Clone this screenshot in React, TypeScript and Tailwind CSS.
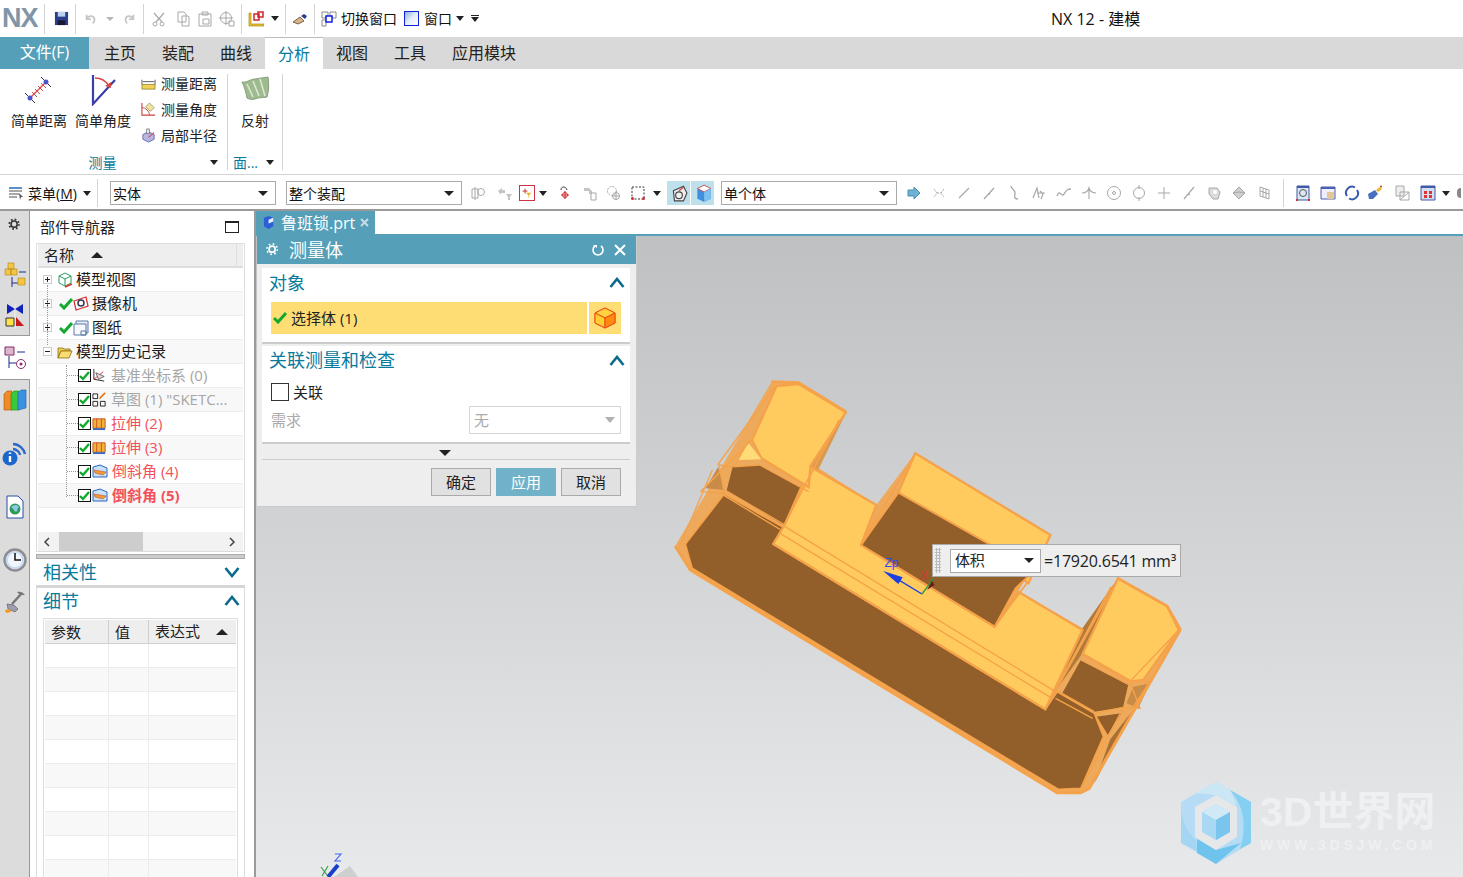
import type { ReactNode } from "react";

const FONT = "font-['Open_Sans','Noto_Sans_CJK_SC','Noto_Sans',sans-serif]";

function Ico({ s = 16, children, className = "" }: { s?: number; children: ReactNode; className?: string }) {
  return (
    <svg width={s} height={s} viewBox="0 0 16 16" fill="none" className={`shrink-0 ${className}`}>
      {children}
    </svg>
  );
}

function Tri({ className = "" }: { className?: string }) {
  return <span className={`inline-block h-0 w-0 border-x-[5px] border-t-[5px] border-x-transparent border-t-[#222] ${className}`} />;
}

function UpTri({ className = "" }: { className?: string }) {
  return <span className={`inline-block h-0 w-0 border-x-[6px] border-b-[6px] border-x-transparent border-b-[#222] ${className}`} />;
}

function Chevron({ down = false }: { down?: boolean }) {
  return (
    <svg width="16" height="12" viewBox="0 0 16 12" fill="none">
      <path d={down ? "M1.5 2 8 10 14.5 2" : "M1.5 10 8 2 14.5 10"} stroke="#0b6a8a" strokeWidth="2.6" />
    </svg>
  );
}

function Sep({ ml }: { ml: string }) {
  return <div className={`h-[30px] w-px shrink-0 bg-[#d4d4d4] ${ml}`} />;
}

const GRAY = "#a8a8a8";

const snapIcons: ReactNode[] = [
  <path d="M2 5h6V2l6 6-6 6v-3H2z" fill="#6db3d6" stroke="#4a8cab" />,
  <g stroke={GRAY} strokeDasharray="2 1"><path d="M3 4l3 4-3 4M13 4l-3 4 3 4M6 8h4" /></g>,
  <path d="M3 13 13 3" stroke={GRAY} strokeWidth="1.3" />,
  <path d="M3 14 13 3M8 8.500l1 1" stroke={GRAY} strokeWidth="1.3" />,
  <path d="M5 1c0 3 4 3 4 7s-1 4 0 5 3 1 3 1" stroke={GRAY} strokeWidth="1.3" />,
  <path d="M2 13 6 3l2 10M9 6l3 3-2 5M6 8h8" stroke={GRAY} strokeWidth="1.2" />,
  <path d="M1 11c3-8 4 2 7-2s3-5 7-5" stroke={GRAY} strokeWidth="1.3" />,
  <path d="M8 2v12M1 8c3 0 6-2 7-5 1 3 4 5 7 5" stroke={GRAY} strokeWidth="1.1" />,
  <g stroke={GRAY}><circle cx="8" cy="8" r="6.500" /><circle cx="8" cy="8" r="1.500" /></g>,
  <g stroke={GRAY}><circle cx="8" cy="8" r="5.500" /><path d="M8 0v4M8 12v4" /></g>,
  <path d="M8 2v12M2 8h12" stroke={GRAY} />,
  <path d="M3 14 13 2M7 9l2 1" stroke={GRAY} strokeWidth="1.2" />,
  <g><path d="M3 3h8l3 4-2 7H7L3 9z" fill="#dcdcdc" stroke={GRAY} /><circle cx="9" cy="7" r="2" fill="#fff" /></g>,
  <g stroke={GRAY} fill="#cfcfcf"><path d="M8 2l6 6-6 6-6-6z" /><path d="M2 8l6-1 6 1" fill="none" /></g>,
  <g stroke={GRAY}><path d="M4 2l9 3v9l-9-3z" /><path d="M7 3v9M10 4v9M4 6l9 3" /></g>,
];

function TopBar() {
  return (
    <div className="flex h-[37px] shrink-0 items-center bg-white text-[14px] text-[#111]">
      <span className="ml-[2px] w-[38px] font-['Liberation_Sans',sans-serif] text-[27px] leading-none font-bold tracking-[-1px] text-[#8195a8]">NX</span>
      <Sep ml="ml-[4px]" />
      <Ico className="ml-[9px]" s={15}>
        <path d="M1 1h14v14H1z" fill="#2b3e8c" /><path d="M4 1h8v5H4z" fill="#bcd0ef" /><path d="M4 10h8v5H4z" fill="#161b33" />
      </Ico>
      <Sep ml="ml-[6px]" />
      <Ico className="ml-[8px]" s={14}><path d="M3 3v5h5M3 8c3-5 9-4 9 1 0 2-1 3-2 4" stroke="#c6c6c6" strokeWidth="2" /></Ico>
      <Tri className="ml-[8px] !border-x-[4px] !border-t-[4px] !border-t-[#b5b5b5]" />
      <Ico className="ml-[8px]" s={14}><path d="M13 3v5H8M13 8C10 3 4 4 4 9c0 2 1 3 2 4" stroke="#c6c6c6" strokeWidth="2" /></Ico>
      <Sep ml="ml-[7px]" />
      <Ico className="ml-[7px]"><path d="M13 2 5 11M3 2l8 9" stroke={GRAY} strokeWidth="1.2" /><circle cx="4" cy="13" r="2" stroke={GRAY} /><circle cx="11" cy="13" r="2" stroke={GRAY} /></Ico>
      <Ico className="ml-[8px]"><path d="M3 1h6l2 2v8H3zM7 5h6l1 1v9H7z" fill="#fff" stroke={GRAY} /></Ico>
      <Ico className="ml-[6px]"><path d="M2 3h12v12H2zM5 1h6v3H5zM6 8h6v5H6z" fill="#fff" stroke={GRAY} /></Ico>
      <Ico className="ml-[6px]"><circle cx="7" cy="7" r="5.500" stroke={GRAY} /><path d="M7 0v14M0 7h14M10 10h5v5h-5z" stroke={GRAY} /></Ico>
      <Sep ml="ml-[6px]" />
      <Ico className="ml-[6px]"><path d="M1 2v13h15v-2H3V2z" fill="#e5c22d" stroke="#b08a10" strokeWidth=".7" /><path d="M6 3h5v6H6z" stroke="#d0262e" strokeWidth="1.500" /><path d="M10 1h5v5h-5z" stroke="#d0262e" strokeWidth="1.500" /></Ico>
      <Tri className="ml-[7px] !border-x-[4px]" />
      <Sep ml="ml-[6px]" />
      <Ico className="ml-[6px]"><path d="M1 11 8 6l4 4-6 3z" fill="#d7b58a" stroke="#7e6446" /><path d="M9 5l3-2 3 2-2 3z" fill="#2d3c8f" /></Ico>
      <Sep ml="ml-[6px]" />
      <Ico className="ml-[6px]"><path d="M1 1h6v4H5v2H1zM9 1h6v6h-4V5H9zM1 9h4v6H1z" stroke="#8a8a8a" /><path d="M5 5h6v6H5z" fill="#fff" stroke="#1122dd" strokeWidth="1.500" /></Ico>
      <span className="ml-[4px] whitespace-nowrap">切换窗口</span>
      <span className="ml-[7px] h-[15px] w-[15px] shrink-0 border-[1.500px] border-[#1122dd] bg-gradient-to-br from-[#8fb1d8] via-[#e5eff9] to-white" />
      <span className="ml-[5px] whitespace-nowrap">窗口</span>
      <Tri className="ml-[4px] !border-x-[4px]" />
      <span className="ml-[7px] flex flex-col items-center gap-px"><span className="h-px w-[8px] bg-[#222]" /><Tri className="!border-x-[4px]" /></span>
      <span className="ml-[572px] text-[16px] whitespace-nowrap">NX 12 - 建模</span>
    </div>
  );
}

const tabs = [
  { label: "主页", w: "w-[58px]" },
  { label: "装配", w: "w-[58px]" },
  { label: "曲线", w: "w-[58px]" },
  { label: "分析", w: "w-[58px]", active: true },
  { label: "视图", w: "w-[58px]" },
  { label: "工具", w: "w-[58px]" },
  { label: "应用模块", w: "w-[90px]" },
];

function TabRow() {
  return (
    <div className="flex h-[32px] shrink-0 items-stretch bg-[#d9d9d9] text-[16px] text-[#222]">
      <div className="flex w-[89px] items-center justify-center bg-[#559fb9] pb-[3px] text-white">文件(F)</div>
      <div className="w-[2px]" />
      {tabs.map((t) => (
        <div
          key={t.label}
          className={`flex items-center justify-center ${t.w} ${t.active ? "border-t border-[#bbb] bg-white text-[#0a7a9c]" : ""}`}
        >
          {t.label}
        </div>
      ))}
    </div>
  );
}

function SmallTool({ icon, label }: { icon: ReactNode; label: string }) {
  return (
    <div className="flex h-[26px] items-center gap-[5px]">
      {icon}
      <span className="whitespace-nowrap">{label}</span>
    </div>
  );
}

function Ribbon() {
  return (
    <div className="flex h-[106px] shrink-0 border-b border-[#d4d4d4] bg-white text-[14px] text-[#222]">
      <div className="flex w-[227px] flex-col">
        <div className="flex h-[85px] pt-[5px]">
          <div className="ml-[7px] flex w-[64px] flex-col items-center">
            <svg width="32" height="32" viewBox="0 0 32 32" fill="none">
              <path d="M2 19l10 10M18 3l10 10" stroke="#333" />
              <path d="M6 25 24 7" stroke="#d84a4a" strokeWidth="1.200" />
              <path d="M9 18l5 5M12 15l5 5M15 12l5 5M18 9l5 5" stroke="#d84a4a" />
              <circle cx="7" cy="24" r="2.500" fill="#4a55c8" /><circle cx="23" cy="8" r="2.500" fill="#4a55c8" />
            </svg>
            <span className="mt-[4px] whitespace-nowrap">简单距离</span>
          </div>
          <div className="flex w-[64px] flex-col items-center">
            <svg width="32" height="32" viewBox="0 0 32 32" fill="none">
              <path d="M6 1v29L28 6" stroke="#3b3fa8" strokeWidth="2.200" />
              <path d="M8 4c6 0 11 3 14 8" stroke="#d34848" strokeWidth="1.400" /><path d="M18 12l6 2 0-6z" fill="#d34848" />
            </svg>
            <span className="mt-[4px] whitespace-nowrap">简单角度</span>
          </div>
          <div className="-mt-[4px] ml-[6px] flex flex-col">
            <SmallTool label="测量距离" icon={<Ico s={15}><path d="M1 9h14v5H1z" fill="#f0d25a" stroke="#7d6b16" strokeWidth=".7" /><path d="M1 4v5M15 4v5M2 6h12" stroke="#555" /></Ico>} />
            <SmallTool label="测量角度" icon={<Ico s={15}><path d="M1 1v13h14" stroke="#c94444" strokeWidth="1.200" /><path d="M1 6c4 0 8 4 8 8" stroke="#c94444" /><path d="M5 5 9 1l5 5-4 4z" fill="#efe2a2" stroke="#8a8140" strokeWidth=".7" /></Ico>} />
            <SmallTool label="局部半径" icon={<Ico s={15}><path d="M2 7l6-3 6 3v5l-6 3-6-3z" fill="#b7b7e4" stroke="#6b6bb0" /><path d="M6 1h3v5H6z" fill="#f0f0f0" stroke="#555" strokeWidth=".7" /><path d="M8 10l6-5" stroke="#d94a4a" strokeWidth="1.200" /></Ico>} />
          </div>
        </div>
        <div className="relative flex h-[20px] items-center justify-center pb-[3px] text-[#0a7a9c]">
          <span className="pr-[22px]">测量</span>
          <Tri className="absolute right-[9px] !border-x-[4px]" />
        </div>
      </div>
      <div className="mt-[5px] mb-[4px] w-px bg-[#d4d4d4]" />
      <div className="flex w-[54px] flex-col">
        <div className="flex h-[85px] flex-col items-center pt-[7px]">
          <svg width="32" height="28" viewBox="0 0 32 28">
            <path d="M3 6c5 1 8-3 13-3 5-1 9-1 13-2 1 6 1 14-1 20-5 1-8 0-12 2-4 1-6 0-8-1C7 16 5 10 3 6z" fill="#9dbb8f" stroke="#88a07c" />
            <path d="M8 8l6 13M14 5l6 15M21 3l5 17" stroke="#dfe8d6" strokeWidth="1.500" />
          </svg>
          <span className="mt-[6px] whitespace-nowrap">反射</span>
        </div>
        <div className="relative flex h-[20px] items-center pb-[3px] pl-[5px] text-[#0a7a9c]">
          <span>面...</span>
          <Tri className="absolute right-[8px] !border-x-[4px]" />
        </div>
      </div>
      <div className="mt-[5px] mb-[4px] w-px bg-[#d4d4d4]" />
    </div>
  );
}

function Combo({ label, w, ml }: { label: string; w: string; ml: string }) {
  return (
    <div className={`flex h-[24px] shrink-0 items-center justify-between border border-[#aaa] bg-white pr-[7px] pl-[2px] text-[14px] text-[#111] ${w} ${ml}`}>
      <span className="whitespace-nowrap">{label}</span>
      <Tri />
    </div>
  );
}

function Toolbar() {
  return (
    <div className="flex h-[36px] shrink-0 items-center border-b-2 border-[#9a9a9a] bg-white pt-[2px] text-[14px] text-[#111]">
      <Ico className="ml-[8px]"><path d="M1 3h13M1 6h13M1 9h10M1 12h8" stroke="#8c8c8c" strokeWidth="1.600" /><path d="M1 3h13" stroke="#5b8fc9" strokeWidth="2" /><path d="M11 8l4 4-2 0-1 3z" fill="#555" /></Ico>
      <span className="ml-[4px] w-[52px] whitespace-nowrap">菜单(<span className="underline">M</span>)</span>
      <Tri className="ml-[3px] !border-x-[4px]" />
      <div className="ml-[6px] h-[28px] w-px bg-[#d4d4d4]" />
      <Combo label="实体" w="w-[166px]" ml="ml-[12px]" />
      <Combo label="整个装配" w="w-[176px]" ml="ml-[10px]" />
      <Ico className="ml-[8px]"><g stroke={GRAY}><path d="M2 4h6v9H2zM5 2v13" /><circle cx="11" cy="7" r="3.500" /></g></Ico>
      <Ico className="ml-[11px]"><path d="M1 6l4-3v2h3v3H4v2zM9 9h6l-2 3v3h-2v-3z" fill="#c4c4c4" /></Ico>
      <span className="ml-[6px] flex h-[16px] w-[16px] shrink-0 items-center justify-center border border-[#cc3344] bg-white">
        <Ico s={13}><path d="M2 5h6M5 2v6" stroke="#c33" strokeWidth="1.200" /><path d="M6 7h7l-3 3v3H9v-3z" fill="#e8b32f" /></Ico>
      </span>
      <Tri className="ml-[4px] !border-x-[4px]" />
      <Ico className="ml-[10px]"><path d="M4 5c0-4 5-4 6 0" stroke="#333" /><path d="M8 14V6M4 10h8" stroke="#c33" strokeWidth="1.200" /><circle cx="8" cy="10" r="2.500" stroke="#c33" /></Ico>
      <Ico className="ml-[9px]"><path d="M2 3h5l3 3v3H7V6H2z" fill="#c4c4c4" /><path d="M9 8h5v7H9z" stroke={GRAY} /></Ico>
      <Ico className="ml-[8px]"><circle cx="6" cy="6" r="4.500" stroke={GRAY} strokeDasharray="2 1" /><circle cx="10" cy="11" r="3.500" stroke={GRAY} /><path d="M10 6v9M6 11h8" stroke={GRAY} /></Ico>
      <Ico className="ml-[8px]"><path d="M2 2h12v12H2z" stroke="#333" strokeDasharray="2 1.500" /><circle cx="2.500" cy="13.500" r="1.500" fill="#c33" /><circle cx="13.500" cy="13.500" r="1.500" fill="#c33" /></Ico>
      <Tri className="ml-[7px] !border-x-[4px]" />
      <div className="ml-[6px] flex h-[24px] w-[23px] items-center justify-center bg-[#bde0ea]">
        <Ico s={18}><path d="M3 6l9-4 3 6-3 7-8 0z" fill="#eee" stroke="#444" /><circle cx="8" cy="10" r="3" stroke="#444" /><path d="M8 6l4-3" stroke="#c33" /></Ico>
      </div>
      <div className="ml-px flex h-[24px] w-[23px] items-center justify-center bg-[#bde0ea]">
        <Ico s={18}><path d="M3 4l6-3 6 3v9l-6 3-6-3z" fill="#3f8fe0" /><path d="M3 4l6 3 6-3-6-3z" fill="#fff" stroke="#c33" strokeWidth=".7" /><path d="M9 7v9l6-3V4z" fill="#7cc0f0" /></Ico>
      </div>
      <Combo label="单个体" w="w-[176px]" ml="ml-[7px]" />
      <div className="ml-[4px] flex">
        {snapIcons.map((g, i) => (
          <div key={i} className="flex w-[25px] justify-center"><Ico s={16}>{g}</Ico></div>
        ))}
      </div>
      <div className="ml-[7px] h-[28px] w-px bg-[#d4d4d4]" />
      <Ico className="ml-[11px]"><path d="M2 1h12v14H2z" fill="#dce8f6" stroke="#3f5aa8" /><circle cx="8" cy="8" r="3.500" stroke="#555" /><path d="M2 1h12v2H2z" fill="#3f5aa8" /><path d="M1 15h2M13 15h2" stroke="#c33" strokeWidth="2" /></Ico>
      <Ico className="ml-[9px]"><path d="M1 2h14v12H1z" fill="#eef" stroke="#4a5fb0" /><path d="M1 2h14v2H1z" fill="#4a5fb0" /><path d="M7 7h7v7H7z" fill="#e4c796" /></Ico>
      <Ico className="ml-[8px]"><path d="M3 11A6 6 0 0 1 11 2.500M13 5A6 6 0 0 1 5 13.500" stroke="#3a5ab0" strokeWidth="2" /></Ico>
      <Ico className="ml-[7px]"><path d="M2 14l-1-5 7-4 3 4-5 5z" fill="#4a6fc0" /><path d="M9 5l4-3 2 2-4 3z" fill="#e8b32f" /><circle cx="14" cy="1.500" r="1" fill="#c33" /></Ico>
      <Ico className="ml-[11px]"><path d="M2 1h8v10H2z" fill="#eee" stroke={GRAY} /><path d="M6 7h9v8H6zM6 15l9-8" stroke={GRAY} /></Ico>
      <Ico className="ml-[10px]"><path d="M1 1h14v14H1z" fill="#d6def2" stroke="#3f5aa8" /><path d="M1 1h14v2H1z" fill="#3f5aa8" /><path d="M4 6h3v3H4zM9 6h3v3H9zM4 10h3v3H4zM9 10h3v3H9z" fill="#d33" /></Ico>
      <Tri className="ml-[6px] !border-x-[4px]" />
      <span className="ml-[7px] h-[10px] w-[4px] shrink-0 rounded-l-full bg-[#888]" />
    </div>
  );
}

const railCls = "flex h-[24px] w-[29px] items-center justify-center";

function Rail() {
  return (
    <div className="flex w-[30px] shrink-0 flex-col border-r border-[#999] bg-[#dcdcdc]">
      <div className={`${railCls} mt-[2px]`}>
        <Ico s={14}><circle cx="7" cy="7" r="3.500" stroke="#333" strokeWidth="1.800" /><circle cx="7" cy="7" r="5.500" stroke="#333" strokeDasharray="2 2.300" strokeWidth="2" /></Ico>
      </div>
      <div className={`${railCls} mt-[26px]`}>
        <svg width="22" height="26" viewBox="0 0 22 26" fill="none">
          <path d="M4 1h6v6H4zM1 7h6v6H1zM7 7h6v6H7z" fill="#f4c544" stroke="#b78f22" strokeWidth=".7" /><path d="M8 15v10M8 21h6M15 10h7" stroke="#1b2a8c" /><path d="M14 16h7v7h-7z" fill="#f4c544" stroke="#b78f22" strokeWidth=".7" />
        </svg>
      </div>
      <div className={`${railCls} mt-[17px]`}>
        <svg width="22" height="26" viewBox="0 0 22 26" fill="none">
          <path d="M3 1l8 5 8-5v10l-8-5-8 5z" fill="#1122bb" /><path d="M11 0v26" stroke="#fff" strokeWidth=".5" /><path d="M2 15h8v8H2z" fill="#ffe24a" stroke="#333" /><path d="M12 14l8 9h-8z" fill="#c91a1a" />
        </svg>
      </div>
      <div className="mt-[7px] flex h-[45px] w-[30px] items-center justify-center border-y border-[#999] bg-white">
        <svg width="24" height="24" viewBox="0 0 24 24" fill="none">
          <path d="M2 1h9v8H2z" fill="#d9b7cc" stroke="#8a2a6a" /><path d="M6 10v12M6 17h7M14 6h8" stroke="#1b2a8c" /><circle cx="18" cy="18" r="4.500" stroke="#8a2a6a" /><circle cx="18" cy="18" r="1.500" fill="#8a2a6a" />
        </svg>
      </div>
      <div className={`${railCls} mt-[8px]`}>
        <svg width="24" height="22" viewBox="0 0 24 22">
          <path d="M1 5l3-3h5v19H1z" fill="#f08a24" stroke="#a8560c" strokeWidth=".6" /><path d="M8 5l3-3h5v19H8z" fill="#38c838" stroke="#178a17" strokeWidth=".6" /><path d="M15 4l3-3h5v18l-8 2z" fill="#3a93e0" stroke="#1a5fa8" strokeWidth=".6" />
        </svg>
      </div>
      <div className={`${railCls} mt-[30px]`}>
        <svg width="26" height="26" viewBox="0 0 26 26" fill="none">
          <path d="M11 3c6 0 11 5 12 10M11 8c3 0 7 3 7 6" stroke="#2b68c8" strokeWidth="2.400" /><circle cx="8" cy="17" r="7.500" fill="#1d66cc" /><path d="M8 11.500v1.500M8 15v6" stroke="#fff" strokeWidth="2.400" />
        </svg>
      </div>
      <div className={`${railCls} mt-[29px]`}>
        <svg width="20" height="24" viewBox="0 0 20 24" fill="none">
          <path d="M2 1h11l5 5v17H2z" fill="#fff" stroke="#2b4aa8" /><circle cx="10" cy="14" r="5.500" fill="#2f9a55" /><path d="M6 12c2-2 6-3 8 0-2 1-1 4-3 5-2-1-3-4-5-5z" fill="#8fc7ea" />
        </svg>
      </div>
      <div className={`${railCls} mt-[29px]`}>
        <svg width="24" height="24" viewBox="0 0 24 24" fill="none">
          <circle cx="12" cy="12" r="10.500" fill="#c9dbf5" stroke="#8d8d8d" strokeWidth="2.400" /><circle cx="12" cy="12" r="7" fill="#f2f6fc" /><path d="M12 5v7h6" stroke="#111" strokeWidth="1.500" />
        </svg>
      </div>
      <div className={`${railCls} mt-[18px]`}>
        <svg width="22" height="24" viewBox="0 0 22 24" fill="none">
          <path d="M18 3 8 14" stroke="#777" strokeWidth="2.500" /><path d="M13 2c3-1 6 0 8 3l-5 0z" fill="#777" /><path d="M3 14l7 1 4 4-3 3-7-3z" fill="#9c9cb0" stroke="#555" strokeWidth=".6" /><path d="M1 20l5-1 1 3-5 1z" fill="#f09a1e" />
        </svg>
      </div>
    </div>
  );
}

type Row = { text: string; tone?: "dark" | "gray" | "red" | "bold"; root?: ReactNode; icon: ReactNode };

const Check = () => (
  <svg width="14" height="12" viewBox="0 0 14 12" className="shrink-0"><path d="M1 6l4 4 8-9" fill="none" stroke="#12a92f" strokeWidth="3" /></svg>
);

const Box = () => (
  <span className="flex h-[13px] w-[13px] shrink-0 items-center justify-center border border-[#111] bg-white">
    <svg width="11" height="10" viewBox="0 0 11 10"><path d="M1 5l3 3 6-7" fill="none" stroke="#12a92f" strokeWidth="2.400" /></svg>
  </span>
);

const extrude = <Ico s={15}><path d="M1 3h13v10H1z" fill="#f2b23c" stroke="#c9531d" /><path d="M5 3v10M10 3v10" stroke="#c9531d" /><path d="M1 13h13v2H1z" fill="#3769c8" /></Ico>;
const chamfer = <Ico s={16}><path d="M1 3 8 1l7 3v9H1z" fill="#c9e1f7" stroke="#2b62c8" /><path d="M2 6l12 2-3 3-8-2z" fill="#f09a3c" stroke="#c9531d" strokeWidth=".6" /></Ico>;

const rows: Row[] = [
  { text: "模型视图", icon: <Ico s={16}><path d="M8 1l6 3v7l-6 3-6-3V4z" stroke="#2c9c62" /><path d="M2 4l6 3 6-3M8 7v7" stroke="#2c9c62" /><path d="M8 15l7-3" stroke="#d33" strokeWidth="1.500" /></Ico> },
  { text: "摄像机", root: <Check />, icon: <Ico s={16}><path d="M1 5l12-4 2 9-12 4z" fill="#fff" stroke="#d33" strokeWidth="1.300" /><circle cx="8" cy="7" r="3" stroke="#335" strokeWidth="1.500" /></Ico> },
  { text: "图纸", root: <Check />, icon: <Ico s={16}><path d="M3 1h12v12H3z" fill="#e8eef8" stroke="#5c78a8" /><path d="M1 4h12v11H1z" fill="#f6f8fc" stroke="#5c78a8" /><path d="M8 11h5v4H8z" stroke="#5c78a8" /></Ico> },
  { text: "模型历史记录", icon: <Ico s={16}><path d="M1 4h5l1 1h6v2H4L1 14z" fill="#f0d050" stroke="#8a6a10" strokeWidth=".8" /><path d="M4 7h11l-3 7H1z" fill="#f7dc72" stroke="#8a6a10" strokeWidth=".8" /></Ico> },
  { text: "基准坐标系 (0)", tone: "gray", icon: <Ico s={15}><path d="M2 1v11l11 2" stroke="#222" /><path d="M2 12 12 4" stroke="#d33" /><path d="M4 5l9 4-6 3z" fill="#ddd" stroke="#333" strokeWidth=".7" /></Ico> },
  { text: '草图 (1) "SKETC...', tone: "gray", icon: <Ico s={15}><path d="M1 2h5v5H1zM1 10h5v5H1zM9 10h5v5H9z" stroke="#222" /><path d="M8 7l6-6" stroke="#e89a1e" strokeWidth="2" /><path d="M8 7l6-6" stroke="#d33" strokeWidth=".6" /></Ico> },
  { text: "拉伸 (2)", tone: "red", icon: extrude },
  { text: "拉伸 (3)", tone: "red", icon: extrude },
  { text: "倒斜角 (4)", tone: "red", icon: chamfer },
  { text: "倒斜角 (5)", tone: "bold", icon: chamfer },
];

const toneCls = {
  dark: "text-[#1a1a1a]",
  gray: "text-[#a6a6a6]",
  red: "text-[#f2515c]",
  bold: "font-bold text-[#f2515c]",
};

function TreeRow({ row, i }: { row: Row; i: number }) {
  const top = i < 4;
  return (
    <div className={`relative flex h-[24px] items-center border-b border-[#ededed] text-[15px] whitespace-nowrap ${i % 2 ? "bg-[#f8f8f8]" : "bg-white"}`}>
      {top ? (
        <>
          <span className="ml-[5px] flex h-[9px] w-[9px] shrink-0 items-center justify-center border border-[#ccc] bg-white">
            <svg width="7" height="7" viewBox="0 0 7 7"><path d={i === 3 ? "M1 3.500h5" : "M1 3.500h5M3.500 1v5"} stroke="#222" /></svg>
          </span>
          {row.root ? <span className="ml-[7px] flex">{row.root}</span> : <span className="ml-[5px]" />}
          <span className="flex">{row.icon}</span>
          <span className={`ml-[3px] ${toneCls.dark}`}>{row.text}</span>
        </>
      ) : (
        <>
          <span className="ml-[29px] w-[11px] border-t border-dotted border-[#999]" />
          <Box />
          <span className="ml-[1px] flex">{row.icon}</span>
          <span className={`ml-[4px] ${toneCls[row.tone ?? "dark"]}`}>{row.text}</span>
        </>
      )}
    </div>
  );
}

function NavPanel() {
  return (
    <div className="flex w-[226px] shrink-0 flex-col overflow-hidden border-r-2 border-[#9a9a9a] bg-white pl-[6px] pr-[9px] text-[#222]">
      <div className="flex h-[32px] shrink-0 items-center justify-between pr-[6px] pl-[4px] text-[15px]">
        <span>部件导航器</span>
        <span className="h-[12px] w-[14px] border border-t-2 border-[#222]" />
      </div>
      <div className="flex h-[309px] shrink-0 flex-col border border-[#ddd] px-px">
        <div className="flex h-[24px] shrink-0 items-center border-b-2 border-[#ddd] bg-[#eee] text-[15px]">
          <span className="ml-[6px]">名称</span>
          <UpTri className="ml-[17px]" />
          <span className="ml-auto mr-[6px] h-full w-px bg-[#ddd]" />
        </div>
        <div className="relative flex-1">
          {rows.map((r, i) => <TreeRow key={r.text} row={r} i={i} />)}
          <span className="absolute top-[17px] left-[9px] h-[60px] border-l border-dotted border-[#999]" />
          <span className="absolute top-[97px] left-[28px] h-[132px] border-l border-dotted border-[#999]" />
        </div>
        <div className="flex h-[19px] shrink-0 items-center bg-[#f2f2f2]">
          <svg width="21" height="12" viewBox="0 0 21 12" fill="none"><path d="M11 2 7 6l4 4" stroke="#444" strokeWidth="1.500" /></svg>
          <span className="h-full w-[84px] bg-[#cdcdcd]" />
          <svg width="10" height="12" viewBox="0 0 10 12" fill="none" className="ml-auto mr-[6px]"><path d="M3 2l4 4-4 4" stroke="#444" strokeWidth="1.500" /></svg>
        </div>
      </div>
      <div className="mt-[2px] h-[5px] shrink-0 border border-[#aaa] bg-[#ccc]" />
      <div className="flex h-[26px] shrink-0 items-center justify-between pr-[5px] pl-[7px] text-[18px] text-[#0a7a9c]">
        <span>相关性</span><Chevron down />
      </div>
      <div className="h-[3px] shrink-0 bg-[#d6d6d6]" />
      <div className="flex min-h-0 flex-1 flex-col border-x border-[#ddd]">
        <div className="flex h-[26px] shrink-0 items-center justify-between pr-[4px] pl-[6px] text-[18px] text-[#0a7a9c]">
          <span>细节</span><Chevron />
        </div>
        <div className="mx-[6px] mt-[4px] flex-1 border border-[#ddd] px-px pt-px">
          <div className="flex h-[24px] border-b border-[#d0d0d0] bg-[#eee] text-[15px]">
            <span className="w-[64px] border-r border-[#d0d0d0] pl-[6px] leading-[24px]">参数</span>
            <span className="w-[40px] border-r border-[#d0d0d0] pl-[6px] leading-[24px]">值</span>
            <span className="flex flex-1 items-center pl-[6px]">表达式<UpTri className="ml-[16px]" /></span>
          </div>
          {[0, 1, 2, 3, 4, 5, 6, 7, 8, 9].map((i) => (
            <div key={i} className={`flex h-[24px] border-b border-[#ececec] ${i % 2 ? "bg-[#f8f8f8]" : "bg-white"}`}>
              <span className="w-[64px] border-r border-[#ececec]" />
              <span className="w-[40px] border-r border-[#ececec]" />
            </div>
          ))}
        </div>
      </div>
    </div>
  );
}

function MeasureDialog() {
  return (
    <div className="absolute top-0 left-px flex h-[271px] w-[380px] flex-col border-r border-b border-[#ccc] bg-[#eeeeee]">
      <div className="flex h-[28px] shrink-0 items-center bg-[#559fb9] pr-[10px] pl-[9px] text-[18px] text-white">
        <Ico s={14}><circle cx="7" cy="7" r="3.500" stroke="#fff" strokeWidth="2" /><circle cx="7" cy="7" r="6" stroke="#fff" strokeWidth="1.800" strokeDasharray="2 2.700" /></Ico>
        <span className="ml-[9px]">测量体</span>
        <svg width="14" height="14" viewBox="0 0 14 14" fill="none" className="ml-auto"><path d="M4 3a5 5 0 1 0 6 0" stroke="#fff" strokeWidth="1.600" /><path d="M2 2h4v3" fill="#fff" /></svg>
        <svg width="12" height="12" viewBox="0 0 12 12" fill="none" className="ml-[9px]"><path d="M1 1l10 10M11 1 1 11" stroke="#fff" strokeWidth="2" /></svg>
      </div>
      <div className="mr-[6px] ml-[5px] mt-[4px] h-[76px] shrink-0 border-b-2 border-[#ccc] bg-white">
        <div className="flex h-[34px] items-center justify-between pr-[5px] pb-[4px] pl-[7px] text-[18px] text-[#0a7a9c]">
          <span>对象</span><Chevron />
        </div>
        <div className="mx-[9px] flex h-[32px] gap-[2px]">
          <div className="flex flex-1 items-center bg-[#ffdd75] pl-[2px] text-[15px] text-[#222]">
            <Check /><span className="ml-[4px]">选择体 (1)</span>
          </div>
          <div className="flex w-[32px] items-center justify-center bg-[#ffdd75]">
            <svg width="22" height="22" viewBox="0 0 22 22">
              <path d="M11 1l10 5v10l-10 5-10-5V6z" fill="#ff9d1e" stroke="#ef4a1a" /><path d="M1 6l10 5 10-5-10-5z" fill="#ffd23e" stroke="#ef4a1a" /><path d="M11 11v10L1 16V6z" fill="#ffcf2e" stroke="#ef4a1a" /><path d="M11 11v10l10-5V6z" fill="#ff8a10" stroke="#ef4a1a" />
            </svg>
          </div>
        </div>
      </div>
      <div className="mr-[6px] ml-[5px] mt-[2px] h-[98px] shrink-0 border-b-2 border-[#ccc] bg-white">
        <div className="flex h-[29px] items-center justify-between pr-[5px] pl-[7px] text-[18px] text-[#0a7a9c]">
          <span>关联测量和检查</span><Chevron />
        </div>
        <div className="mt-[8px] ml-[9px] flex h-[18px] items-center text-[15px] text-[#222]">
          <span className="h-[18px] w-[18px] border border-[#333]" />
          <span className="ml-[4px]">关联</span>
        </div>
        <div className="mt-[5px] flex items-center justify-between pr-[9px] pl-[9px] text-[15px] text-[#aaa]">
          <span>需求</span>
          <div className="flex h-[28px] w-[152px] items-center justify-between border border-[#d6d6d6] pr-[5px] pl-[4px]">
            <span>无</span>
            <span className="h-0 w-0 border-x-[5px] border-t-[6px] border-x-transparent border-t-[#b0b0b0]" />
          </div>
        </div>
      </div>
      <div className="mr-[6px] ml-[5px] flex h-[16px] shrink-0 items-center justify-center border-b border-[#ccc] pt-[2px] pr-[2px]">
        <Tri className="!border-x-[6px] !border-t-[6px]" />
      </div>
      <div className="mt-[8px] mr-[15px] flex justify-end gap-[5px] text-[15px] text-[#222]">
        <span className="flex h-[28px] w-[60px] items-center justify-center border border-[#aaa] bg-[#e1e1e1]">确定</span>
        <span className="flex h-[28px] w-[60px] items-center justify-center bg-[#72b2c9] text-white">应用</span>
        <span className="flex h-[28px] w-[60px] items-center justify-center border border-[#aaa] bg-[#e1e1e1]">取消</span>
      </div>
    </div>
  );
}

const edge = "#f5a24a";

function Model() {
  return (
    <svg className="absolute top-[134px] left-[404px]" width="530" height="430" viewBox="0 0 1568 1290" preserveAspectRatio="none" fill="none">
      {/* silhouette */}
      <path d="M330 35 410 38 550 125 470 295 640 405 755 250 1155 495 1060 665 1250 775 1355 625 1500 708 1540 778 1270 1255 1245 1268 1175 1268 90 600 45 528Z" fill="#eeaa5c" />
      {/* brown faces */}
      <path d="M75 522 190 372 365 472 335 522 1140 1018 1175 965 1285 1030 1312 1100 1245 1255 1178 1258 95 595Z" fill="#925e2a" stroke={edge} strokeWidth="5" />
      <path d="M200 350 215 290 295 285 440 365 370 460 360 462 197 362Z" fill="#925e2a" />
      <path d="M1190 970 1245 870 1385 945 1370 1012 1285 1025Z" fill="#925e2a" />
      <path d="M1290 1040 1365 1030 1325 1095Z" fill="#925e2a" />
      <path d="M1250 775 1355 625 1250 850 1172 960Z" fill="#b07a3a" />
      <path d="M440 300 550 130 470 295 375 455Z" fill="#d99a50" />
      <path d="M1380 1000 1400 950 1450 940 1415 1015Z" fill="#c98c48" />
      <path d="M135 355 172 290 190 360Z" fill="#c98c48" />
      <path d="M1332 1108 1400 1020 1285 1240Z" fill="#a87035" />
      {/* yellow faces */}
      <path d="M335 522 370 462 445 290 640 405 595 525 990 770 1060 665 1250 780 1140 1018Z" fill="#ffcb5e" stroke={edge} strokeWidth="7" strokeLinejoin="round" />
      <path d="M345 48 410 42 550 127 445 288 440 352 300 265 272 210Z" fill="#ffcb5e" stroke={edge} strokeWidth="7" />
      <path d="M755 250 1155 495 1090 640 705 368Z" fill="#ffcb5e" stroke={edge} strokeWidth="7" />
      <path d="M1355 625 1500 708 1535 780 1430 930 1390 935 1250 852Z" fill="#ffcb5e" stroke={edge} strokeWidth="7" />
      <path d="M262 220 300 268 230 270Z" fill="#ffdc78" />
      {/* notch */}
      <path d="M595 525 705 368 1110 600 1052 655 990 770Z" fill="#925e2a" stroke={edge} strokeWidth="6" />
      <path d="M595 525 755 250M990 770 1085 640M370 460 530 150M1140 1018 1355 625M1170 960 1335 650" stroke={edge} strokeWidth="5" />
      {/* double lines along the long edge */}
      <path d="M195 362 365 462M190 377 355 478M1180 965 1285 1025M1170 985 1280 1045" stroke={edge} strokeWidth="4" />
      <path d="M355 490 1160 985M370 470 1170 965" stroke={edge} strokeWidth="4" />
      <path d="M295 285 440 365M300 265 440 350M1245 870 1390 945M1250 850 1390 930" stroke={edge} strokeWidth="4" />
      {/* chamfer wires */}
      <path d="M340 50 170 285M270 210 120 365M190 370 75 522M215 290 175 285 190 370M120 365 190 370M295 285 220 290 262 210M155 300 60 525" stroke={edge} strokeWidth="4" />
      <path d="M1285 1030 1370 1012 1420 1015 1390 935 1535 780M1285 1030 1325 1100 1370 1015M1325 1100 1245 1258M1400 1010 1450 935 1390 935" stroke={edge} strokeWidth="4" />
      <path d="M45 528 90 600 1175 1268 1245 1268 1270 1255 1540 778" stroke={edge} strokeWidth="9" strokeLinejoin="round" />
      <path d="M330 35 410 38 550 125M1355 625 1500 708 1540 778" stroke={edge} strokeWidth="8" />
      {/* csys */}
      <path d="M775 672 690 620" stroke="#1b3fe0" strokeWidth="4" />
      <path d="M660 603 718 622 705 642Z" fill="#1b3fe0" />
      <path d="M775 672 810 625" stroke="#2f9a3a" strokeWidth="4" />
      <path d="M790 660 805 632 812 645Z" fill="#6b1c1c" />
      <text x="664" y="590" fill="#2850ee" fontSize="36" fontFamily="Liberation Sans, sans-serif">Zp</text>
      <text x="770" y="630" fill="#d33838" fontSize="36" fontFamily="Liberation Sans, sans-serif">X</text>
    </svg>
  );
}

function Watermark() {
  return (
    <div className="absolute top-[546px] left-[924px] flex items-start">
      <svg width="72" height="82" viewBox="0 0 72 82">
        <path d="M36 0 71 20v41L36 82 1 61V20z" fill="#b6dcf5" />
        <path d="M50 8 71 20v41L60 67C66 48 66 26 50 8z" fill="#85cff2" />
        <path d="M17 57 36 68l25-7-25 21L17 71z" fill="#6fc4ee" />
        <path d="M1 28c2 14 8 24 15 30l1 11L1 61z" fill="#a3d6f2" />
        <path d="M14 11 36 0l14 8c4 8 6 12 6 16L36 13z" fill="#cbe7f6" />
        <path d="M36 13 57 25v30L36 68 15 55V25z" fill="#e6e7e9" />
        <path d="M36 22 50 30v20L36 58 22 50V30z" fill="#a8d8f3" />
        <path d="M36 22 50 30 36 38 22 30z" fill="#cfe9f7" />
        <path d="M36 38 50 30v20L36 58z" fill="#79c5ee" />
      </svg>
      <div className="ml-[8px] flex flex-col text-[#eff0f2]">
        <span className="mt-[7px] font-['Liberation_Sans','Noto_Sans_CJK_SC',sans-serif] text-[41px] leading-[46px] font-bold whitespace-nowrap">3D世界网</span>
        <span className="mt-[2px] font-['Liberation_Sans',sans-serif] text-[14px] leading-[16px] font-bold tracking-[3.800px] whitespace-nowrap">WWW.3DSJW.COM</span>
      </div>
    </div>
  );
}

function Viewport() {
  return (
    <div className="flex min-w-0 flex-1 flex-col">
      <div className="flex h-[25px] shrink-0 border-b-2 border-[#559fb9] bg-white">
        <div className="flex w-[119px] items-center bg-[#559fb9] pl-[6px] text-[16px] text-white">
          <Ico s={15}><path d="M2 3l5-2 5 2v9l-5 3-5-3z" fill="#2b5fd8" /><path d="M7 5l5-2v4L7 9z" fill="#e8f0ff" /></Ico>
          <span className="ml-[4px] whitespace-nowrap">鲁班锁.prt</span>
          <svg width="9" height="9" viewBox="0 0 9 9" fill="none" className="ml-[5px]"><path d="M1 1l7 7M8 1 1 8" stroke="#c9dbe3" strokeWidth="2" /></svg>
        </div>
      </div>
      <div className="relative flex-1 overflow-hidden bg-gradient-to-b from-[#bec0c2] to-[#e8e9eb]">
        <Model />
        <MeasureDialog />
        <div className="absolute top-[308px] left-[676px] flex h-[33px] w-[249px] items-center border border-[#aaa] bg-[#eeeeee] text-[16px] tracking-[-0.2px] text-[#222]">
          <span className="ml-[2px] h-[25px] w-[6px] bg-[radial-gradient(#bbb_1.300px,transparent_1.400px)] bg-[length:3px_3px]" />
          <div className="ml-[9px] flex h-[24px] w-[91px] items-center justify-between border border-[#aaa] bg-white pr-[6px] pl-[4px] text-[15px]">
            <span>体积</span><Tri />
          </div>
          <span className="ml-[3px] whitespace-nowrap">=17920.6541 mm³</span>
        </div>
        <Watermark />
        <svg className="absolute bottom-0 left-[64px]" width="40" height="24" viewBox="0 0 40 24" fill="none">
          <path d="M14 24 30 13l8 11z" fill="#cfcfcf" />
          <path d="M8 24 18 12" stroke="#1b3fc8" strokeWidth="4" />
          <path d="M1 14l6 8M8 13l-6 10" stroke="#3aa04a" strokeWidth="1.200" />
          <path d="M15 1h6l-6 7h6" stroke="#3a64f0" strokeWidth="1.100" />
        </svg>
      </div>
    </div>
  );
}

export default function App() {
  return (
    <div className={`flex h-[877px] w-[1463px] flex-col overflow-hidden bg-white ${FONT}`}>
      <TopBar />
      <TabRow />
      <Ribbon />
      <Toolbar />
      <div className="flex min-h-0 flex-1">
        <Rail />
        <NavPanel />
        <Viewport />
      </div>
    </div>
  );
}
